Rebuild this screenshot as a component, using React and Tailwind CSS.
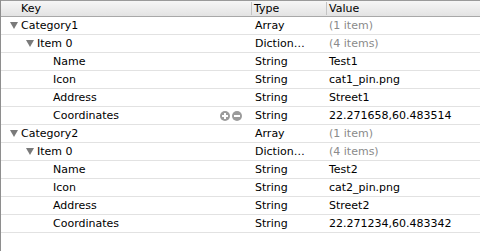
import React from "react";

const rows = [
  { key: "Category1", level: 0, open: true, type: "Array", value: "(1 item)", muted: true },
  { key: "Item 0", level: 1, open: true, type: "Diction…", value: "(4 items)", muted: true },
  { key: "Name", level: 2, type: "String", value: "Test1" },
  { key: "Icon", level: 2, type: "String", value: "cat1_pin.png" },
  { key: "Address", level: 2, type: "String", value: "Street1" },
  { key: "Coordinates", level: 2, type: "String", value: "22.271658,60.483514", hover: true },
  { key: "Category2", level: 0, open: true, type: "Array", value: "(1 item)", muted: true },
  { key: "Item 0", level: 1, open: true, type: "Diction…", value: "(4 items)", muted: true },
  { key: "Name", level: 2, type: "String", value: "Test2" },
  { key: "Icon", level: 2, type: "String", value: "cat2_pin.png" },
  { key: "Address", level: 2, type: "String", value: "Street2" },
  { key: "Coordinates", level: 2, type: "String", value: "22.271234,60.483342" },
];

const indent = ["pl-[9px]", "pl-[25px]", "pl-[52px]"];

function Triangle() {
  return (
    <svg width="8" height="7" viewBox="0 0 8 7" className="mr-[3px] shrink-0">
      <polygon points="0,0 8,0 4,7" fill="#7a7a7a" />
    </svg>
  );
}

function RoundButton({ plus }) {
  return (
    <svg width="10" height="10" viewBox="0 0 10 10">
      <circle cx="5" cy="5" r="5" fill="#9b9b9b" />
      <rect x="2" y="4" width="6" height="2" fill="#fff" />
      {plus && <rect x="4" y="2" width="2" height="6" fill="#fff" />}
    </svg>
  );
}

function Row({ row }) {
  return (
    <div className="flex h-[18px] items-center border-b border-[#e2e2e2]">
      <div className={`flex w-[251px] items-center ${indent[row.level]}`}>
        {row.open && <Triangle />}
        <span>{row.key}</span>
        {row.hover && (
          <span className="ml-auto mr-[10px] flex gap-[2px]">
            <RoundButton plus />
            <RoundButton />
          </span>
        )}
      </div>
      <div className="w-[75px] pl-[3px]">{row.type}</div>
      <div className={`flex-1 pl-[2px] ${row.muted ? "text-[#8a8a8a]" : ""}`}>{row.value}</div>
    </div>
  );
}

export default function App() {
  return (
    <div
      className="h-[251px] w-[480px] overflow-hidden border-l border-[#8e8e8e] bg-white text-[11px] leading-none text-black"
      style={{ fontFamily: '"DejaVu Sans", sans-serif' }}
    >
      <div className="flex h-[17px] items-center border-t border-b border-t-[#9a9a9a] border-b-[#a8a8a8] bg-gradient-to-b from-[#f6f6f6] to-[#e3e3e3]">
        <div className="w-[250px] pl-[20px]">Key</div>
        <div className="flex h-[13px] w-[75px] items-center border-l border-[#c4c4c4] pl-[2px]">Type</div>
        <div className="flex h-[13px] flex-1 items-center border-l border-[#c4c4c4] pl-[2px]">Value</div>
      </div>
      {rows.map((row, i) => (
        <Row key={i} row={row} />
      ))}
    </div>
  );
}
